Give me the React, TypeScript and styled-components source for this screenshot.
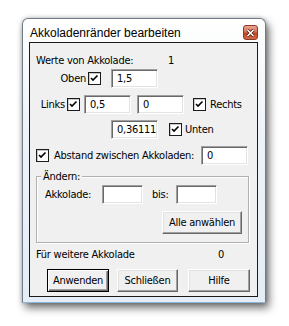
import React from 'react';
import styled, { createGlobalStyle } from 'styled-components';

const GlobalStyle = createGlobalStyle`
  html, body {
    margin: 0;
    padding: 0;
    background: #ffffff;
  }
`;

const Page = styled.div`
  width: 289px;
  height: 326px;
  padding: 18px 0 0 22px;
  box-sizing: border-box;
`;

/* Vista basic frame */
const Frame = styled.div`
  width: 244px;
  height: 285px;
  box-sizing: border-box;
  border: 1px solid #6f7c88;
  border-radius: 6px 6px 0 0;
  background: linear-gradient(180deg, #ffffff 0%, #eef3f8 40%, #e4edf5 100%);
  box-shadow: 3px 5px 9px rgba(0, 0, 0, 0.55), 0 0 4px rgba(0, 0, 0, 0.25);
  padding: 0 7px 5px 6px;
  display: flex;
  flex-direction: column;
  border-bottom-color: #8fb6d6;
`;

const TitleBar = styled.div`
  height: 23px;
  display: flex;
  align-items: center;
  justify-content: space-between;
  padding: 0 0 0 1px;
`;

const Title = styled.span`
  font-family: "Segoe UI", "Liberation Sans", sans-serif;
  font-size: 12px;
  color: #000;
  margin-top: 4px;
`;

const CloseButton = styled.span`
  width: 15px;
  height: 15px;
  margin-top: 4px;
  box-sizing: border-box;
  border: 1px solid #8a3a26;
  border-radius: 3px;
  background: linear-gradient(180deg, #eaa48e 0%, #d8735a 45%, #c2441f 55%, #d46a48 100%);
  display: flex;
  align-items: center;
  justify-content: center;
`;

const Client = styled.div`
  flex: 1;
  border: 1px solid #1b1b1b;
  background: #f0f0f0;
  padding: 11px 0 0 6px;
  display: flex;
  flex-direction: column;
  font-family: "DejaVu Sans Condensed", "DejaVu Sans", "Liberation Sans", sans-serif;
  font-stretch: condensed;
  font-size: 11px;
  letter-spacing: -0.25px;
  color: #000;
`;

const Row = styled.div<{ $top?: number; $left?: number; $h?: number }>`
  display: flex;
  align-items: center;
  height: ${(p) => p.$h ?? 19}px;
  margin-top: ${(p) => p.$top ?? 0}px;
  padding-left: ${(p) => p.$left ?? 0}px;
`;

const Label = styled.span<{ $w?: number; $gap?: number; $right?: boolean }>`
  display: inline-block;
  white-space: nowrap;
  width: ${(p) => (p.$w ? `${p.$w}px` : 'auto')};
  text-align: ${(p) => (p.$right ? 'right' : 'left')};
  margin-right: ${(p) => p.$gap ?? 0}px;
`;

const Field = styled.div<{ $w?: number; $gap?: number }>`
  width: ${(p) => p.$w ?? 48}px;
  height: 19px;
  box-sizing: border-box;
  background: #fff;
  border-top: 1px solid #a0a0a0;
  border-left: 1px solid #a0a0a0;
  border-right: 1px solid #ffffff;
  border-bottom: 1px solid #ffffff;
  box-shadow: inset 1px 1px 0 #696969, inset -1px -1px 0 #e3e3e3;
  padding: 0 0 0 5px;
  display: flex;
  align-items: center;
  margin-right: ${(p) => p.$gap ?? 0}px;
  flex-shrink: 0;
`;

const Box = styled.span<{ $gap?: number }>`
  width: 13px;
  height: 13px;
  box-sizing: border-box;
  background: #fff;
  border: 1px solid #1c1c1c;
  box-shadow: inset 1px 1px 0 #c8c8c8;
  display: inline-flex;
  align-items: center;
  justify-content: center;
  margin-right: ${(p) => p.$gap ?? 0}px;
  flex-shrink: 0;
`;

const Group = styled.div`
  position: relative;
  width: 213px;
  height: 67px;
  box-sizing: border-box;
  margin-top: 11px;
  border: 1px solid #b0b0b0;
  box-shadow: inset 1px 1px 0 #ffffff, 1px 1px 0 #ffffff;
  padding: 8px 0 0 8px;
  display: flex;
  flex-direction: column;
`;

const Legend = styled.span`
  position: absolute;
  top: -7px;
  left: 4px;
  padding: 0 2px;
  background: #f0f0f0;
  line-height: 13px;
`;

const Button = styled.div<{ $w: number; $default?: boolean; $gap?: number }>`
  width: ${(p) => p.$w}px;
  height: 23px;
  box-sizing: border-box;
  background: #f0f0f0;
  border: 1px solid;
  border-color: ${(p) => (p.$default ? '#000' : '#fff #696969 #696969 #fff')};
  box-shadow: ${(p) =>
    p.$default
      ? 'inset 1px 1px 0 #ffffff, inset -1px -1px 0 #696969, inset -2px -2px 0 #a0a0a0'
      : 'inset -1px -1px 0 #a0a0a0, inset 1px 1px 0 #e3e3e3'};
  display: flex;
  align-items: center;
  justify-content: center;
  margin-right: ${(p) => p.$gap ?? 0}px;
`;

const Check = () => (
  <svg width="9" height="9" viewBox="0 0 9 9">
    <path d="M1 4 L3 6 L7.5 1.5" stroke="#000" strokeWidth="1.6" fill="none" />
  </svg>
);

const App: React.FC = () => (
  <Page>
    <GlobalStyle />
    <Frame>
      <TitleBar>
        <Title>Akkoladenränder bearbeiten</Title>
        <CloseButton>
          <svg width="9" height="8" viewBox="0 0 9 8">
            <path d="M1.5 1 L7.5 7 M7.5 1 L1.5 7" stroke="#3a1a10" strokeWidth="3" />
            <path d="M1.5 1 L7.5 7 M7.5 1 L1.5 7" stroke="#fff" strokeWidth="1.6" />
          </svg>
        </CloseButton>
      </TitleBar>
      <Client>
        <Row $h={13}>
          <Label $w={132}>Werte von Akkolade:</Label>
          <Label>1</Label>
        </Row>
        <Row $top={2}>
          <Label $w={50} $right $gap={2}>Oben</Label>
          <Box $gap={10}><Check /></Box>
          <Field $w={47}>1,5</Field>
        </Row>
        <Row $top={7}>
          <Label $w={29} $right $gap={2}>Links</Label>
          <Box $gap={4}><Check /></Box>
          <Field $w={47} $gap={6}>0,5</Field>
          <Field $w={47} $gap={9}>0</Field>
          <Box $gap={4}><Check /></Box>
          <Label>Rechts</Label>
        </Row>
        <Row $top={6} $left={75}>
          <Field $w={47} $gap={11}>0,36111</Field>
          <Box $gap={3}><Check /></Box>
          <Label>Unten</Label>
        </Row>
        <Row $top={7}>
          <Box $gap={5}><Check /></Box>
          <Label $w={147}>Abstand zwischen Akkoladen:</Label>
          <Field $w={47}>0</Field>
        </Row>
        <Group>
          <Legend>Ändern:</Legend>
          <Row>
            <Label $w={57}>Akkolade:</Label>
            <Field $w={41} $gap={9}></Field>
            <Label $w={24}>bis:</Label>
            <Field $w={41}></Field>
          </Row>
          <Row $top={7} $h={23} $left={117}>
            <Button $w={80}>Alle anwählen</Button>
          </Row>
        </Group>
        <Row $top={5} $h={13}>
          <Label $w={182}>Für weitere Akkolade</Label>
          <Label>0</Label>
        </Row>
        <Row $top={8} $h={23} $left={11}>
          <Button $w={62} $default $gap={8}>Anwenden</Button>
          <Button $w={61} $gap={10}>Schließen</Button>
          <Button $w={62}>Hilfe</Button>
        </Row>
      </Client>
    </Frame>
  </Page>
);

export default App;
